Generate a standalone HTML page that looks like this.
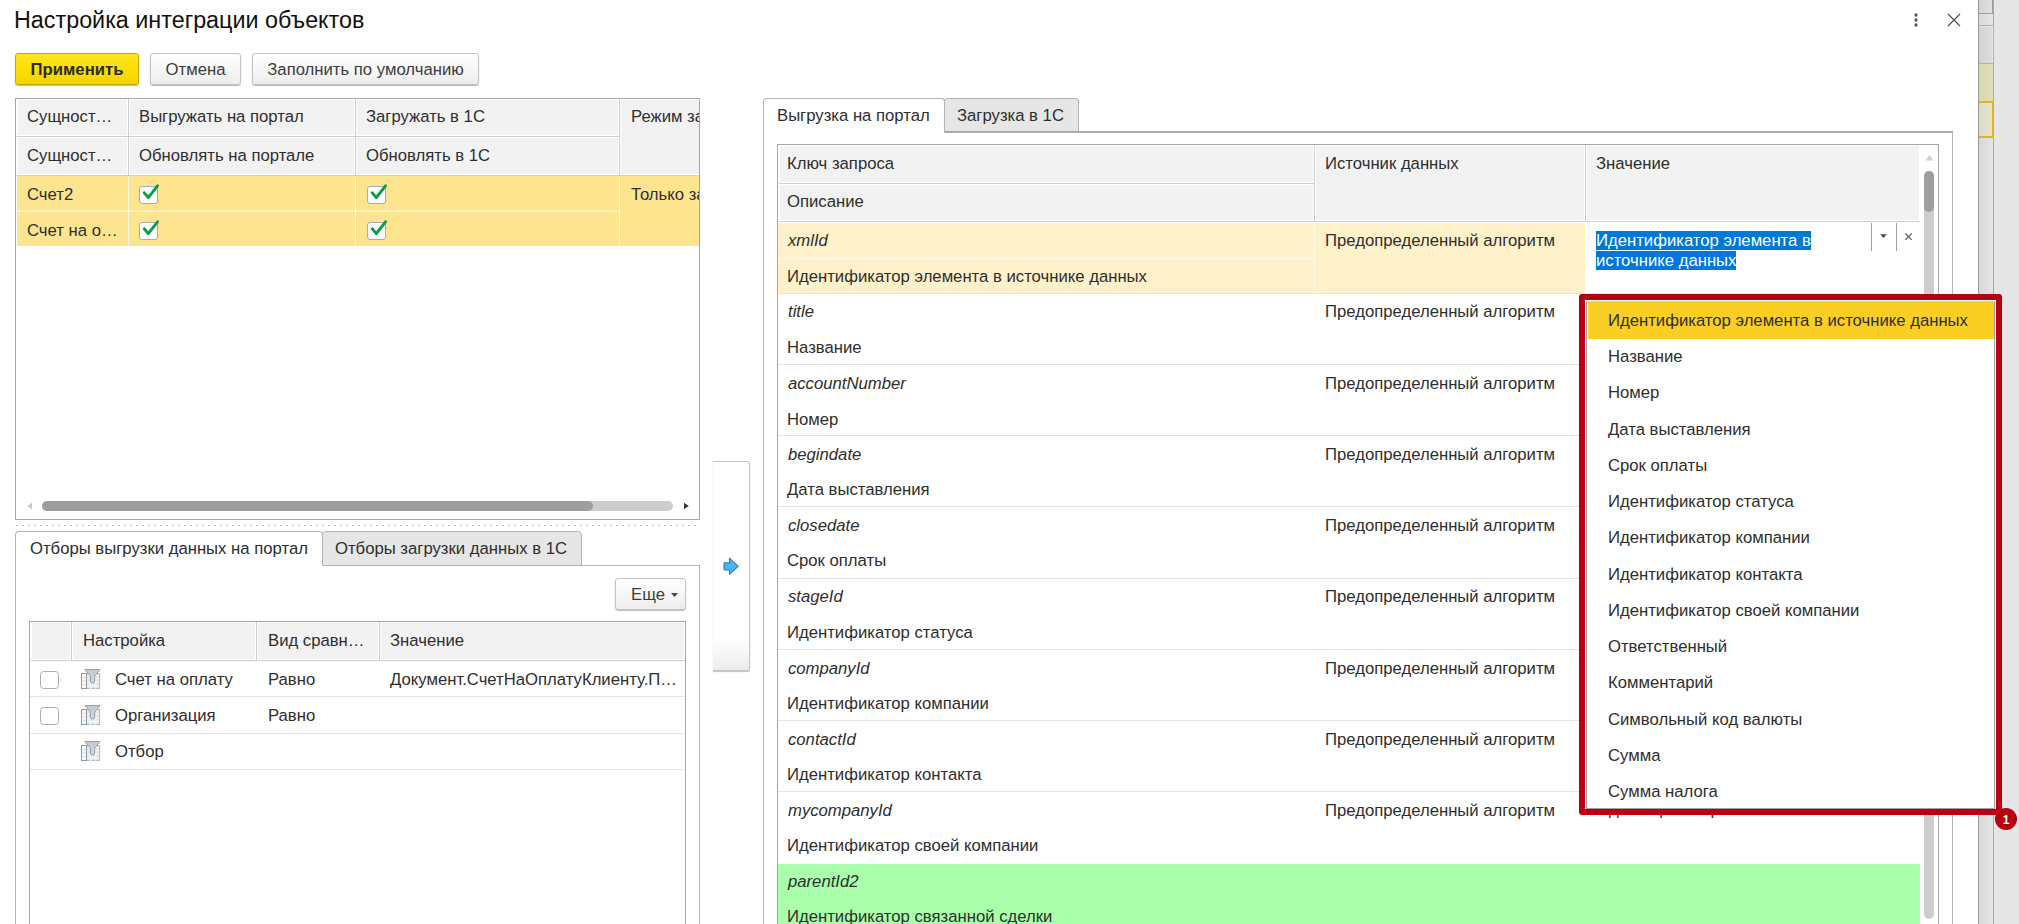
<!DOCTYPE html>
<html lang="ru">
<head>
<meta charset="utf-8">
<title>Настройка интеграции объектов</title>
<style>
*{box-sizing:border-box;margin:0;padding:0}
html,body{width:2019px;height:924px;overflow:hidden;background:#fff}
body{position:relative;font-family:"Liberation Sans",sans-serif;font-size:16.7px;color:#2e2e2e;line-height:18px}
.a{position:absolute}
.t{position:absolute;white-space:nowrap;line-height:18px;height:18px}
.i{font-style:italic}
.hc{position:absolute;background:#f2f2f2;border:1px solid #fff}
.btn{position:absolute;border:1px solid #c3c3c3;border-radius:3px;background:linear-gradient(#ffffff,#f3f3f3 70%,#ececec);box-shadow:0 1px 1px rgba(0,0,0,.28);text-align:center;line-height:32px;height:32px;color:#3c3c3c}
.cb{position:absolute;width:19px;height:18px;border:1px solid #adadad;border-radius:3.5px;background:#fff}
.ln{position:absolute;background:#e4e5e7;height:1px}
</style>
</head>
<body>
<!-- SECTION:backdrop -->
<div class="a" style="left:1978px;top:0;width:41px;height:924px;background:#e6e6e6"></div>
<div class="a" style="left:1978px;top:0;width:16px;height:924px;background:linear-gradient(90deg,#d8d8d8,#e6e6e6);border-left:1px solid #9a9a9a;border-right:1px solid #a9a9a9"></div>
<div class="a" style="left:1979px;top:0;width:14px;height:14px;background:linear-gradient(90deg,#d4d4d4,#e0e0e0);border-bottom:1px solid #9c9c9c;border-right:1px solid #9c9c9c"></div>
<div class="a" style="left:1979px;top:25px;width:15px;height:39px;background:linear-gradient(90deg,#d2d2d2,#dedede);border:1px solid #b0b0b0;border-left:0;box-shadow:inset -1px 1px 0 #e8e8e8"></div>
<div class="a" style="left:1979px;top:64px;width:14px;height:37px;background:linear-gradient(90deg,#d7d8ae,#dfe0ba)"></div>
<div class="a" style="left:1979px;top:101px;width:15px;height:37px;background:linear-gradient(90deg,#dcddc6,#e4e5d2);border:2px solid #e3b31f;border-left:0"></div>
<!-- SECTION:title -->
<div class="t" style="left:14px;top:7px;font-size:23.33px;line-height:26px;height:26px;color:#111">Настройка интеграции объектов</div>
<svg class="a" style="left:1910px;top:10px" width="12" height="20" viewBox="0 0 12 20"><g fill="#555"><circle cx="6" cy="5" r="1.65"/><circle cx="6" cy="10" r="1.65"/><circle cx="6" cy="15" r="1.65"/></g></svg>
<svg class="a" style="left:1946px;top:12px" width="16" height="16" viewBox="0 0 16 16"><path d="M2 2L14 14M14 2L2 14" stroke="#505050" stroke-width="1.150" fill="none"/></svg>
<div class="btn" style="left:15px;top:53px;width:124px;font-weight:bold;color:#2b2b2b;border-color:#c9a500;background:linear-gradient(#ffe61c,#fbdd08 55%,#f3d400)">Применить</div>
<div class="btn" style="left:150px;top:53px;width:91px">Отмена</div>
<div class="btn" style="left:252px;top:53px;width:227px">Заполнить по умолчанию</div>
<!-- SECTION:lefttable -->
<div class="a" style="left:15px;top:98px;width:685px;height:422px;border:1px solid #a6a6a6;background:#fff;overflow:hidden">
<div class="a" style="left:1px;top:0;width:700px;height:77px;background:#cdcdcd"></div>
<div class="hc" style="left:1px;top:0;width:111px;height:37px"></div>
<div class="hc" style="left:1px;top:38px;width:111px;height:38px"></div>
<div class="hc" style="left:113px;top:0;width:226px;height:37px"></div>
<div class="hc" style="left:113px;top:38px;width:226px;height:38px"></div>
<div class="hc" style="left:340px;top:0;width:263px;height:37px"></div>
<div class="hc" style="left:340px;top:38px;width:263px;height:38px"></div>
<div class="hc" style="left:604px;top:0;width:120px;height:76px"></div>
<div class="t" style="left:11px;top:9px">Сущност…</div>
<div class="t" style="left:11px;top:48px">Сущност…</div>
<div class="t" style="left:123px;top:9px">Выгружать на портал</div>
<div class="t" style="left:123px;top:48px">Обновлять на портале</div>
<div class="t" style="left:350px;top:9px">Загружать в 1С</div>
<div class="t" style="left:350px;top:48px">Обновлять в 1С</div>
<div class="t" style="left:615px;top:9px">Режим загрузки</div>
<div class="a" style="left:1px;top:77px;width:700px;height:70px;background:#fde590"></div>
<div class="a" style="left:1px;top:111px;width:602px;height:2px;background:#fef0bd"></div>
<div class="a" style="left:112px;top:77px;width:1px;height:70px;background:#fff8de"></div>
<div class="a" style="left:339px;top:77px;width:1px;height:70px;background:#fff8de"></div>
<div class="a" style="left:603px;top:77px;width:1px;height:70px;background:#fff8de"></div>
<div class="t" style="left:11px;top:87px">Счет2</div>
<div class="t" style="left:11px;top:123px">Счет на о…</div>
<div class="t" style="left:615px;top:87px">Только загрузка</div>
<svg class="a" style="left:123px;top:84px" width="22" height="22" viewBox="0 0 22 22"><rect x="0.5" y="3.5" width="18" height="17" rx="2.500" fill="#fff" stroke="#a9a9b2"/><path d="M5.300 9.900L9.300 14.600L18.500 2.800" fill="none" stroke="#0a9e48" stroke-width="3" stroke-linecap="round" stroke-linejoin="round"/></svg>
<svg class="a" style="left:351px;top:84px" width="22" height="22" viewBox="0 0 22 22"><rect x="0.5" y="3.5" width="18" height="17" rx="2.500" fill="#fff" stroke="#a9a9b2"/><path d="M5.300 9.900L9.300 14.600L18.500 2.800" fill="none" stroke="#0a9e48" stroke-width="3" stroke-linecap="round" stroke-linejoin="round"/></svg>
<svg class="a" style="left:123px;top:120px" width="22" height="22" viewBox="0 0 22 22"><rect x="0.5" y="3.5" width="18" height="17" rx="2.500" fill="#fff" stroke="#a9a9b2"/><path d="M5.300 9.900L9.300 14.600L18.500 2.800" fill="none" stroke="#0a9e48" stroke-width="3" stroke-linecap="round" stroke-linejoin="round"/></svg>
<svg class="a" style="left:351px;top:120px" width="22" height="22" viewBox="0 0 22 22"><rect x="0.5" y="3.5" width="18" height="17" rx="2.500" fill="#fff" stroke="#a9a9b2"/><path d="M5.300 9.900L9.300 14.600L18.500 2.800" fill="none" stroke="#0a9e48" stroke-width="3" stroke-linecap="round" stroke-linejoin="round"/></svg>
<svg class="a" style="left:10px;top:401px" width="670" height="12" viewBox="0 0 670 12"><path d="M6 2.5L1.5 6L6 9.5Z" fill="#c8c8c8"/><rect x="16" y="1" width="631" height="10" rx="5" fill="#cdcdcd"/><rect x="16" y="1" width="551" height="10" rx="5" fill="#9e9e9e"/><path d="M658 2.800L662.800 6L658 9.200Z" fill="#3a3a3a"/></svg>
</div>
<div class="a" style="left:16px;top:525px;width:684px;height:1px;background:repeating-linear-gradient(90deg,#c2c2c2 0,#c2c2c2 2px,#fff 2px,#fff 6px)"></div>
<!-- SECTION:lefttabs -->
<div class="a" style="left:15px;top:565px;width:685px;height:370px;border:1px solid #b3b3b3;border-bottom:0"></div>
<div class="a" style="left:322px;top:531px;width:260px;height:35px;background:#e6e6e6;border:1px solid #b3b3b3;border-radius:4px 4px 0 0"></div>
<div class="a" style="left:15px;top:531px;width:308px;height:35px;background:#fff;border:1px solid #b3b3b3;border-bottom:0;border-radius:4px 4px 0 0"></div>
<div class="t" style="left:30px;top:540px">Отборы выгрузки данных на портал</div>
<div class="t" style="left:335px;top:540px">Отборы загрузки данных в 1С</div>
<div class="btn" style="left:615px;top:578px;width:71px;height:32px;line-height:32px;text-align:left;padding-left:15px">Еще</div>
<svg class="a" style="left:670px;top:592px" width="9" height="6" viewBox="0 0 9 6"><path d="M1 1h7l-3.5 4z" fill="#444"/></svg>
<div class="a" style="left:29px;top:621px;width:657px;height:320px;border:1px solid #a6a6a6;background:#fff;overflow:hidden">
<div class="a" style="left:1px;top:0;width:655px;height:39px;background:#cdcdcd"></div>
<div class="hc" style="left:1px;top:0;width:40px;height:38px"></div>
<div class="hc" style="left:42px;top:0;width:184px;height:38px"></div>
<div class="hc" style="left:227px;top:0;width:122px;height:38px"></div>
<div class="hc" style="left:350px;top:0;width:305px;height:38px"></div>
<div class="t" style="left:53px;top:10px">Настройка</div>
<div class="t" style="left:238px;top:10px">Вид сравн…</div>
<div class="t" style="left:360px;top:10px">Значение</div>
<div class="ln" style="left:0;top:74px;width:655px"></div>
<div class="ln" style="left:0;top:111px;width:655px"></div>
<div class="ln" style="left:0;top:147px;width:655px"></div>
<div class="cb" style="left:10px;top:49px"></div>
<div class="cb" style="left:10px;top:85px"></div>
<svg class="a" style="left:49px;top:45px" width="22" height="23" viewBox="0 0 22 23"><rect x="2.5" y="6.5" width="18" height="15" fill="#e6e9ec" stroke="#b4bcc3"/><path d="M11.5 10v12M16 10v12M8 11.5h12M8 15h12M8 18.5h12" stroke="#f7f8f9" fill="none"/><rect x="2.5" y="6.5" width="5" height="15" fill="#f6f7f8" stroke="#8d99a3"/><path d="M3 10.5h4M3 14h4M3 17.500h4" stroke="#dfe3e6" fill="none"/><path d="M6 2.600H21L15.700 8.800V14.200Q15.700 16 13.500 16Q11.300 16 11.300 14.200V8.800Z" fill="#cfd5db" stroke="#8e99a3" stroke-linejoin="round"/><path d="M8.200 3.600H18.800L14.800 8.200H12.200Z" fill="#c3cad1"/></svg>
<svg class="a" style="left:49px;top:81px" width="22" height="23" viewBox="0 0 22 23"><rect x="2.5" y="6.5" width="18" height="15" fill="#e6e9ec" stroke="#b4bcc3"/><path d="M11.5 10v12M16 10v12M8 11.5h12M8 15h12M8 18.5h12" stroke="#f7f8f9" fill="none"/><rect x="2.5" y="6.5" width="5" height="15" fill="#f6f7f8" stroke="#8d99a3"/><path d="M3 10.5h4M3 14h4M3 17.500h4" stroke="#dfe3e6" fill="none"/><path d="M6 2.600H21L15.700 8.800V14.200Q15.700 16 13.500 16Q11.300 16 11.300 14.200V8.800Z" fill="#cfd5db" stroke="#8e99a3" stroke-linejoin="round"/><path d="M8.200 3.600H18.800L14.800 8.200H12.200Z" fill="#c3cad1"/></svg>
<svg class="a" style="left:49px;top:117px" width="22" height="23" viewBox="0 0 22 23"><rect x="2.5" y="6.5" width="18" height="15" fill="#e6e9ec" stroke="#b4bcc3"/><path d="M11.5 10v12M16 10v12M8 11.5h12M8 15h12M8 18.5h12" stroke="#f7f8f9" fill="none"/><rect x="2.5" y="6.5" width="5" height="15" fill="#f6f7f8" stroke="#8d99a3"/><path d="M3 10.5h4M3 14h4M3 17.500h4" stroke="#dfe3e6" fill="none"/><path d="M6 2.600H21L15.700 8.800V14.200Q15.700 16 13.500 16Q11.300 16 11.300 14.200V8.800Z" fill="#cfd5db" stroke="#8e99a3" stroke-linejoin="round"/><path d="M8.200 3.600H18.800L14.800 8.200H12.200Z" fill="#c3cad1"/></svg>
<div class="t" style="left:85px;top:49px">Счет на оплату</div>
<div class="t" style="left:238px;top:49px">Равно</div>
<div class="t" style="left:360px;top:49px">Документ.СчетНаОплатуКлиенту.П…</div>
<div class="t" style="left:85px;top:85px">Организация</div>
<div class="t" style="left:238px;top:85px">Равно</div>
<div class="t" style="left:85px;top:121px">Отбор</div>
</div>
<!-- SECTION:middle -->
<div class="a" style="left:713px;top:461px;width:37px;height:210px;border:1px solid #c3c3c3;border-left:0;border-radius:0 3px 3px 0;background:linear-gradient(#fff,#fff 85%,#ececec);box-shadow:0 1px 1px rgba(0,0,0,.25)"></div>
<svg class="a" style="left:722px;top:556px" width="18" height="20" viewBox="0 0 18 20"><path d="M2.700 6.700H7.500V2.200L16.200 10.300L7.500 18.400V14H2.700Q2 14 2 13.300V7.400Q2 6.700 2.700 6.700Z" fill="#4db3ee" stroke="#2b82bc" stroke-width="1.100" stroke-linejoin="round"/></svg>
<!-- SECTION:righttable -->
<div class="a" style="left:763px;top:131px;width:1190px;height:800px;border:1px solid #b3b3b3;border-top:2px solid #ababab"></div>
<div class="a" style="left:944px;top:98px;width:135px;height:35px;background:#e6e6e6;border:1px solid #b3b3b3;border-bottom:2px solid #ababab;border-radius:4px 4px 0 0"></div>
<div class="a" style="left:763px;top:98px;width:182px;height:35px;background:#fff;border:1px solid #b3b3b3;border-bottom:0;border-radius:4px 4px 0 0"></div>
<div class="t" style="left:777px;top:107px">Выгрузка на портал</div>
<div class="t" style="left:957px;top:107px">Загрузка в 1С</div>
<div class="a" style="left:777px;top:144px;width:1162px;height:800px;border:1px solid #a6a6a6;background:#fff;overflow:hidden">
<div class="a" style="left:1px;top:0;width:1141px;height:77px;background:#cdcdcd"></div>
<div class="hc" style="left:1px;top:0;width:535px;height:38px"></div>
<div class="hc" style="left:1px;top:39px;width:535px;height:37px"></div>
<div class="hc" style="left:537px;top:0;width:270px;height:76px"></div>
<div class="hc" style="left:808px;top:0;width:334px;height:76px"></div>
<div class="t" style="left:9px;top:10px">Ключ запроса</div>
<div class="t" style="left:9px;top:48px">Описание</div>
<div class="t" style="left:547px;top:10px">Источник данных</div>
<div class="t" style="left:818px;top:10px">Значение</div>
<div class="a" style="left:0;top:78px;width:807px;height:70px;background:#fff2cb"></div>
<div class="a" style="left:0;top:113px;width:536px;height:1px;background:#fff9e6"></div>
<div class="a" style="left:536px;top:78px;width:1px;height:70px;background:#fff9e6"></div>
<div class="a" style="left:0;top:719px;width:1142px;height:80px;background:#a9ffaa"></div>
<div class="t i" style="left:10px;top:87px">xmlId</div>
<div class="t" style="left:9px;top:123px">Идентификатор элемента в источнике данных</div>
<div class="t" style="left:547px;top:87px">Предопределенный алгоритм</div>
<div class="ln" style="left:0;top:148px;width:1142px"></div>
<div class="t i" style="left:10px;top:158px">title</div>
<div class="t" style="left:9px;top:194px">Название</div>
<div class="t" style="left:547px;top:158px">Предопределенный алгоритм</div>
<div class="t" style="left:819px;top:158px">Название</div>
<div class="ln" style="left:0;top:219px;width:1142px"></div>
<div class="t i" style="left:10px;top:230px">accountNumber</div>
<div class="t" style="left:9px;top:266px">Номер</div>
<div class="t" style="left:547px;top:230px">Предопределенный алгоритм</div>
<div class="t" style="left:819px;top:230px">Номер</div>
<div class="ln" style="left:0;top:290px;width:1142px"></div>
<div class="t i" style="left:10px;top:301px">begindate</div>
<div class="t" style="left:9px;top:336px">Дата выставления</div>
<div class="t" style="left:547px;top:301px">Предопределенный алгоритм</div>
<div class="t" style="left:819px;top:301px">Дата выставления</div>
<div class="ln" style="left:0;top:361px;width:1142px"></div>
<div class="t i" style="left:10px;top:372px">closedate</div>
<div class="t" style="left:9px;top:407px">Срок оплаты</div>
<div class="t" style="left:547px;top:372px">Предопределенный алгоритм</div>
<div class="t" style="left:819px;top:372px">Срок оплаты</div>
<div class="ln" style="left:0;top:433px;width:1142px"></div>
<div class="t i" style="left:10px;top:443px">stageId</div>
<div class="t" style="left:9px;top:479px">Идентификатор статуса</div>
<div class="t" style="left:547px;top:443px">Предопределенный алгоритм</div>
<div class="t" style="left:819px;top:443px">Идентификатор статуса</div>
<div class="ln" style="left:0;top:504px;width:1142px"></div>
<div class="t i" style="left:10px;top:515px">companyId</div>
<div class="t" style="left:9px;top:550px">Идентификатор компании</div>
<div class="t" style="left:547px;top:515px">Предопределенный алгоритм</div>
<div class="t" style="left:819px;top:515px">Идентификатор компании</div>
<div class="ln" style="left:0;top:575px;width:1142px"></div>
<div class="t i" style="left:10px;top:586px">contactId</div>
<div class="t" style="left:9px;top:621px">Идентификатор контакта</div>
<div class="t" style="left:547px;top:586px">Предопределенный алгоритм</div>
<div class="t" style="left:819px;top:586px">Идентификатор контакта</div>
<div class="ln" style="left:0;top:646px;width:1142px"></div>
<div class="t i" style="left:10px;top:657px">mycompanyId</div>
<div class="t" style="left:9px;top:692px">Идентификатор своей компании</div>
<div class="t" style="left:547px;top:657px">Предопределенный алгоритм</div>
<div class="t" style="left:819px;top:656px">Идентификатор своей компании</div>
<div class="t i" style="left:10px;top:728px">parentId2</div>
<div class="t" style="left:9px;top:763px">Идентификатор связанной сделки</div>
<div class="a" style="left:818px;top:86px;width:260px;line-height:20px;color:#fff;white-space:normal"><span style="background:#0078d7">Идентификатор элемента в<br>источнике данных</span></div>
<div class="a" style="left:1093px;top:78px;width:1px;height:28px;background:#a0a0a0"></div>
<div class="a" style="left:1118px;top:78px;width:1px;height:28px;background:#a0a0a0"></div>
<svg class="a" style="left:1101px;top:88px" width="9" height="6" viewBox="0 0 9 6"><path d="M1.200 1.300h6.600l-3.300 3.800z" fill="#4a4a4a"/></svg>
<svg class="a" style="left:1126px;top:87px" width="9" height="9" viewBox="0 0 9 9"><path d="M1.300 1.500L7.700 7.900M7.700 1.500L1.300 7.900" stroke="#666" stroke-width="1.300" fill="none"/></svg>
<svg class="a" style="left:1142px;top:0" width="19" height="780" viewBox="0 0 19 780"><path d="M5.5 15.5h8l-4 -5.5z" fill="#d0d0d0"/><rect x="4" y="26" width="10" height="748" rx="5" fill="#cdcdcd"/><rect x="4" y="26" width="10" height="41" rx="5" fill="#9e9e9e"/></svg>
</div>
<!-- SECTION:dropdown -->
<div class="a" style="left:1579px;top:294px;width:423px;height:521px;background:#b80011;border-radius:3px"></div>
<div class="a" style="left:1585px;top:300px;width:411px;height:509px;background:#fff"></div>
<div class="a" style="left:1586px;top:301px;width:409px;height:508px;border:1px solid #a0a0a0;border-top-color:#d0d0d0"></div>
<div class="a" style="left:1588px;top:302px;width:406px;height:37px;background:#fbce23"></div>
<div class="t" style="left:1608px;top:312px">Идентификатор элемента в источнике данных</div>
<div class="t" style="left:1608px;top:348px">Название</div>
<div class="t" style="left:1608px;top:384px">Номер</div>
<div class="t" style="left:1608px;top:421px">Дата выставления</div>
<div class="t" style="left:1608px;top:457px">Срок оплаты</div>
<div class="t" style="left:1608px;top:493px">Идентификатор статуса</div>
<div class="t" style="left:1608px;top:529px">Идентификатор компании</div>
<div class="t" style="left:1608px;top:566px">Идентификатор контакта</div>
<div class="t" style="left:1608px;top:602px">Идентификатор своей компании</div>
<div class="t" style="left:1608px;top:638px">Ответственный</div>
<div class="t" style="left:1608px;top:674px">Комментарий</div>
<div class="t" style="left:1608px;top:711px">Символьный код валюты</div>
<div class="t" style="left:1608px;top:747px">Сумма</div>
<div class="t" style="left:1608px;top:783px">Сумма налога</div>
<div class="a" style="left:1995px;top:808px;width:22px;height:22px;border-radius:11px;background:#b80011;color:#fff;font-weight:bold;font-size:12px;line-height:24px;text-align:center">1</div>
</body>
</html>
